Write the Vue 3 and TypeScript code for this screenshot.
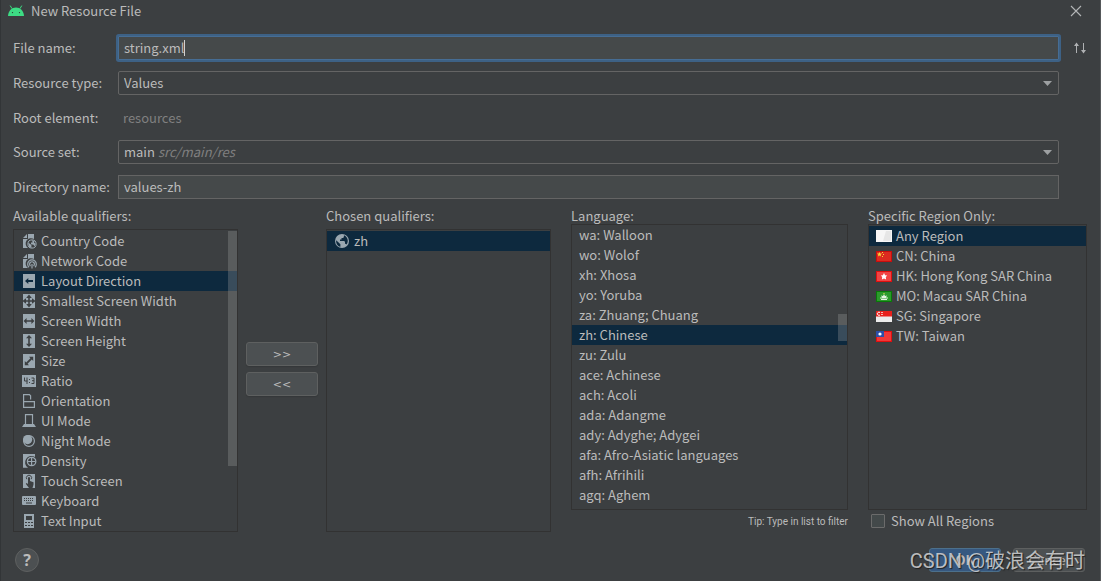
<script setup lang="ts">
import { ref } from 'vue'

interface Qualifier {
  icon: string
  name: string
}

const fileName = ref('string.xml')
const directoryName = ref('values-zh')
const showAll = ref(false)

const qualifiers: Qualifier[] = [
  { icon: 'country', name: 'Country Code' },
  { icon: 'network', name: 'Network Code' },
  { icon: 'direction', name: 'Layout Direction' },
  { icon: 'smallest', name: 'Smallest Screen Width' },
  { icon: 'width', name: 'Screen Width' },
  { icon: 'height', name: 'Screen Height' },
  { icon: 'size', name: 'Size' },
  { icon: 'ratio', name: 'Ratio' },
  { icon: 'orientation', name: 'Orientation' },
  { icon: 'uimode', name: 'UI Mode' },
  { icon: 'night', name: 'Night Mode' },
  { icon: 'density', name: 'Density' },
  { icon: 'touch', name: 'Touch Screen' },
  { icon: 'keyboard', name: 'Keyboard' },
  { icon: 'textinput', name: 'Text Input' },
]
const selectedQualifier = ref('Layout Direction')

const languages: string[] = [
  'wa: Walloon',
  'wo: Wolof',
  'xh: Xhosa',
  'yo: Yoruba',
  'za: Zhuang; Chuang',
  'zh: Chinese',
  'zu: Zulu',
  'ace: Achinese',
  'ach: Acoli',
  'ada: Adangme',
  'ady: Adyghe; Adygei',
  'afa: Afro-Asiatic languages',
  'afh: Afrihili',
  'agq: Aghem',
]
const selectedLanguage = ref('zh: Chinese')

const regions = [
  { flag: 'any', name: 'Any Region' },
  { flag: 'cn', name: 'CN: China' },
  { flag: 'hk', name: 'HK: Hong Kong SAR China' },
  { flag: 'mo', name: 'MO: Macau SAR China' },
  { flag: 'sg', name: 'SG: Singapore' },
  { flag: 'tw', name: 'TW: Taiwan' },
]
const selectedRegion = ref('Any Region')
</script>

<template>
  <div class="dialog">
    <header class="titlebar">
      <svg class="android" viewBox="0 0 16 12" aria-hidden="true">
        <path d="M2.2 0.6 4 3.6M13.8 0.6 12 3.6" stroke="#3ddc84" stroke-width="1" />
        <path d="M0 11C0.3 6 3.8 2.6 8 2.6S15.7 6 16 11Z" fill="#3ddc84" />
        <circle cx="4.5" cy="7.6" r="0.7" fill="#2b3a33" />
        <circle cx="11.5" cy="7.6" r="0.7" fill="#2b3a33" />
      </svg>
      <h1>New Resource File</h1>
      <button class="close" type="button" aria-label="Close">
        <svg viewBox="0 0 12 12"><path d="M1 1 11 11M11 1 1 11" stroke="#b4b6b7" stroke-width="1.1" /></svg>
      </button>
    </header>

    <form class="form" @submit.prevent>
      <label for="file-name">File name:</label>
      <div class="field">
        <input id="file-name" v-model="fileName" class="text focused" type="text" />
        <span class="caret"></span>
      </div>
      <button class="sort" type="button" aria-label="Swap order">
        <svg viewBox="0 0 12 12"><path d="M2.5 1V11M9.5 1V11" stroke="#afb1b3" /><path d="M0 4 2.5 0.5 5 4ZM7 8 9.5 11.5 12 8Z" fill="#afb1b3" /></svg>
      </button>

      <label for="res-type">Resource type:</label>
      <div class="field">
        <select id="res-type"><option>Values</option></select>
        <svg class="arrow" viewBox="0 0 9 5"><path d="M0 0H9L4.5 5Z" fill="#9da0a2" /></svg>
      </div>
      <span></span>

      <span>Root element:</span>
      <output class="root-value">resources</output>
      <span></span>

      <label for="source-set">Source set:</label>
      <div class="field">
        <select id="source-set"><option>main</option></select>
        <em class="path">src/main/res</em>
        <svg class="arrow" viewBox="0 0 9 5"><path d="M0 0H9L4.5 5Z" fill="#9da0a2" /></svg>
      </div>
      <span></span>

      <label for="dir-name">Directory name:</label>
      <div class="field">
        <input id="dir-name" v-model="directoryName" class="text" type="text" />
      </div>
      <span></span>
    </form>

    <main class="panels">
      <section class="panel">
        <h2 id="avail" class="spaced">Available qualifiers:</h2>
        <ul class="list padded" role="listbox" aria-labelledby="avail">
          <li
            v-for="q in qualifiers"
            :key="q.name"
            role="option"
            :aria-selected="q.name === selectedQualifier"
            :class="{ selected: q.name === selectedQualifier }"
            @click="selectedQualifier = q.name"
          >
            <svg class="icon" viewBox="0 0 16 16" aria-hidden="true">
              <template v-if="q.icon === 'country'">
                <path class="f" d="M6 1V5H2ZM7 1H13V6.1A5.3 5.3 0 0 0 7 15H2V6H7Z" />
                <circle cx="11" cy="11" r="4.1" fill="none" stroke="#9aa7b0" stroke-width="1" />
                <path class="f" d="M7.2 9.6 10.4 12V15L8.2 14ZM11 7.2 13.5 8 13 9.4 14.6 11 13.4 13.6 12.6 11.8 10 11.2V9.6H11.6Z" />
              </template>
              <template v-else-if="q.icon === 'network'">
                <path class="f" d="M6 1V5H2ZM7 1H13V6.1A5.3 5.3 0 0 0 7 15H2V6H7Z" />
                <path class="s" d="M8 14.2A4.3 4.3 0 1 1 14 14.2M9.5 13A2.4 2.4 0 1 1 12.5 13M11 11V15.5" />
              </template>
              <template v-else-if="q.icon === 'direction'">
                <path class="f" d="M2 1H14V15H2Z" />
                <path class="d" d="M4 8 7.3 5V7H12V9H7.3V11Z" />
              </template>
              <template v-else-if="q.icon === 'smallest'">
                <path class="f" d="M2 1H14V15H2Z" />
                <path class="d" d="M7.2 5H5.2L8 1.4 10.8 5H8.8V7.2H11V5.2L14.6 8 11 10.8V8.8H8.8V11H10.8L8 14.6 5.2 11H7.2V8.8H5V10.8L1.4 8 5 5.2V7.2H7.2Z" />
              </template>
              <template v-else-if="q.icon === 'width'">
                <path class="f" d="M2 1H14V15H2Z" />
                <path class="d" d="M2.6 8 5.6 5V7.2H10.4V5L13.4 8 10.4 11V8.8H5.6V11Z" />
              </template>
              <template v-else-if="q.icon === 'height'">
                <path class="f" d="M2 1H14V15H2Z" />
                <path class="d" d="M8 2 11 5.2H8.8V10.8H11L8 14 5 10.8H7.2V5.2H5Z" />
              </template>
              <template v-else-if="q.icon === 'size'">
                <path class="f" d="M2 1H14V15H2Z" />
                <path class="d" d="M12.2 3.8V8L10.8 6.6 6.6 10.8 8 12.2H3.8V8L5.2 9.4 9.4 5.2 8 3.8Z" />
              </template>
              <template v-else-if="q.icon === 'ratio'">
                <path class="f" d="M1 2H15V14H1Z" />
                <path d="M3.5 4.5V8H6.5M6 4.5V11M10.5 5H13V10.5H10.5M11 7.7H13" fill="none" stroke="#3c3f41" />
                <path class="d" d="M8 6H9V7H8ZM8 9H9V10H8Z" />
              </template>
              <path v-else-if="q.icon === 'orientation'" class="s" d="M2.6 8.5V1.6H8.4L9.6 2.8V6.5M2.6 8V14.4H13.4V8.6H2.6" />
              <template v-else-if="q.icon === 'uimode'">
                <path class="s" d="M4.5 12V1.6H11.5V12" /><path class="f" d="M3 11H13L15 14H1Z" />
              </template>
              <template v-else-if="q.icon === 'night'">
                <circle cx="8" cy="8" r="5.4" fill="none" stroke="#9aa7b0" stroke-width="1.2" />
                <circle cx="6.6" cy="6.6" r="4.6" class="f" />
              </template>
              <template v-else-if="q.icon === 'density'">
                <path class="f" d="M2 1H14V4A5.4 5.4 0 0 0 7 14.8H2Z" />
                <circle cx="10.6" cy="8.5" r="4.2" fill="#3c3f41" stroke="#9aa7b0" stroke-width="1.3" />
                <path class="s" d="M10.6 5V12M7 8.5H14.2" />
              </template>
              <template v-else-if="q.icon === 'touch'">
                <path class="f" d="M2 1H14V15H2Z" />
                <path class="d" d="M7 4.5Q8 3.5 9 4.5V8L12.5 9.2V11.5L11.5 15H8L4.8 10.8 5.5 10 7 11Z" />
                <path d="M5.8 6.2A2.6 2.6 0 1 1 10.2 6.2" fill="none" stroke="#3c3f41" />
              </template>
              <template v-else-if="q.icon === 'keyboard'">
                <rect class="f" x="1" y="3" width="14" height="9" rx="1" />
                <path d="M3 5.5H13M3 7.5H13" fill="none" stroke="#3c3f41" stroke-dasharray="1 1" /><path d="M5 10H11" stroke="#3c3f41" />
              </template>
              <template v-else>
                <path class="f" d="M3 1H13V15H3Z" />
                <path class="d" d="M5 3H11V7H5ZM4 9H6V10H4ZM7 9H9V10H7ZM10 9H12V10H10ZM4 12H6V13H4ZM7 12H9V13H7ZM10 12H12V13H10Z" />
              </template>
            </svg>
            <span>{{ q.name }}</span>
          </li>
          <li class="thumb thumb-main" role="presentation" aria-hidden="true"></li>
        </ul>
      </section>

      <div class="movers">
        <button class="btn mover" type="button">&gt;&gt;</button>
        <button class="btn mover" type="button">&lt;&lt;</button>
      </div>

      <section class="panel">
        <h2 id="chosen" class="spaced">Chosen qualifiers:</h2>
        <ul class="list padded" role="listbox" aria-labelledby="chosen">
          <li class="selected" role="option" aria-selected="true">
            <svg class="icon" viewBox="0 0 16 16" aria-hidden="true">
              <circle cx="8" cy="8" r="7" class="f" />
              <path d="M2.2 7.2 6.4 11.2V13.8C3.5 13 1.8 10.5 2.2 7.2ZM10 2.2C14 4 14.8 8.3 12.6 11.6 12.3 11 11.8 10.7 11 10.7V8.8L10 8H6V6.6H7.5V5H9.2Q10 4.5 10 2.2Z" fill="#0d293e" />
            </svg>
            <span>zh</span>
          </li>
        </ul>
      </section>

      <section class="panel language">
        <h2 id="lang">Language:</h2>
        <ul class="list" role="listbox" aria-labelledby="lang">
          <li
            v-for="l in languages"
            :key="l"
            role="option"
            :aria-selected="l === selectedLanguage"
            :class="{ selected: l === selectedLanguage }"
            @click="selectedLanguage = l"
          >
            {{ l }}
          </li>
          <li class="thumb thumb-lang" role="presentation" aria-hidden="true"></li>
        </ul>
        <p class="under tip">Tip: Type in list to filter</p>
      </section>

      <section class="panel region">
        <h2 id="region">Specific Region Only:</h2>
        <ul class="list padded" role="listbox" aria-labelledby="region">
          <li
            v-for="r in regions"
            :key="r.name"
            role="option"
            :aria-selected="r.name === selectedRegion"
            :class="{ selected: r.name === selectedRegion }"
            @click="selectedRegion = r.name"
          >
            <svg class="icon" viewBox="0 0 16 16" aria-hidden="true">
              <template v-if="r.flag === 'any'">
                <rect y="2" width="16" height="12" fill="#f6f6f6" /><path d="M10 3H15V13H7Z" fill="#e6e6e6" />
              </template>
              <template v-else-if="r.flag === 'cn'">
                <rect y="3" width="16" height="11" fill="#c90d0d" /><rect x="1" y="4" width="14" height="9" fill="#dc2b20" />
                <path d="M3.5 4 4.2 5.5 6 5.6 4.6 6.7 5 8.4 3.5 7.5 2 8.4 2.4 6.7 1 5.6 2.8 5.5ZM6 4H7V5H6ZM7 6H8V7H7ZM6 8H7V9H6Z" fill="#f5d83a" />
              </template>
              <template v-else-if="r.flag === 'hk'">
                <rect y="3" width="16" height="11" fill="#e00f0f" /><rect x="1" y="4" width="14" height="9" fill="#f04444" />
                <path d="M8 5 9.1 7.2 11.2 7.4 9.8 9.1 10.1 11.6 8 10.4 5.9 11.6 6.2 9.1 4.8 7.4 6.9 7.2Z" fill="#fff" />
              </template>
              <template v-else-if="r.flag === 'mo'">
                <rect y="3" width="16" height="11" fill="#087a08" /><rect x="1" y="4" width="14" height="9" fill="#2c9a2c" />
                <path d="M8 6 9 8 11 7.5 10 9.5H12V10.5H4V9.5H6L5 7.5 7 8ZM5 11H11V12H5Z" fill="#e4f4df" /><path d="M7.5 5H8.5V6H7.5Z" fill="#ffe54a" />
              </template>
              <template v-else-if="r.flag === 'sg'">
                <rect y="3" width="16" height="11" fill="#ececec" /><rect y="3" width="16" height="5.5" fill="#e8201c" />
                <path d="M4 4.5A1.6 1.6 0 1 0 4 7" fill="none" stroke="#fff" /><path d="M5 4H7V5H5ZM5 6H7V7H5Z" fill="#f8b5b0" />
              </template>
              <template v-else>
                <rect y="3" width="16" height="11" fill="#e00f0f" /><rect x="1" y="4" width="14" height="9" fill="#f03838" />
                <rect y="3" width="8" height="6" fill="#2c4fa8" /><circle cx="4" cy="6" r="1.6" fill="#fff" />
              </template>
            </svg>
            <span>{{ r.name }}</span>
          </li>
        </ul>
        <label class="under check"><input v-model="showAll" type="checkbox" />Show All Regions</label>
      </section>
    </main>

    <footer class="footer">
      <button class="help" type="button" aria-label="Help">?</button>
      <div class="actions">
        <button class="btn primary" type="button">OK</button>
        <button class="btn" type="button">Cancel</button>
        <span class="watermark">CSDN @破浪会有时</span>
      </div>
    </footer>
  </div>
</template>

<style>
body {
  margin: 0;
  background: #3c3f41;
}
</style>

<style scoped>
.dialog {
  box-sizing: border-box;
  min-height: 100vh;
  display: flex;
  flex-direction: column;
  border-left: 1px solid #323537;
  border-right: 1px solid #55585a;
  background: #3c3f41;
  color: #bbbbbb;
  font: 13px/20px 'Noto Sans CJK SC', sans-serif;
}
.dialog * {
  box-sizing: border-box;
}
button,
input,
select {
  font: inherit;
  color: inherit;
  margin: 0;
}
h1,
h2,
p,
ul {
  margin: 0;
  padding: 0;
  font: inherit;
}
.titlebar {
  display: flex;
  align-items: center;
  height: 22px;
  padding: 0 18px 0 7px;
  gap: 7px;
}
.android {
  width: 16px;
  height: 12px;
  fill: none;
}
.close {
  margin-left: auto;
  padding: 0;
  border: 0;
  background: none;
  display: flex;
}
.close svg {
  width: 12px;
  height: 12px;
}
.form {
  display: grid;
  grid-template-columns: 105px 1fr 41px;
  grid-template-rows: 24px 24px 23px 24px 24px;
  row-gap: 11px;
  align-items: center;
  padding: 14px 0 0 12px;
}
.field {
  position: relative;
  display: flex;
}
.text,
select {
  width: 100%;
  height: 24px;
  border: 1px solid #646464;
  padding: 0 5px 2px;
  background: #45494a;
  outline: none;
}
select {
  appearance: none;
  padding-bottom: 0;
  border-radius: 2px;
  background: #3c3f41;
}
.focused {
  border-color: #466d94;
  box-shadow: 0 0 0 2px #3d6185;
  border-radius: 1px;
  caret-color: transparent;
}
.caret {
  position: absolute;
  left: 66px;
  top: 4px;
  width: 1px;
  height: 16px;
  background: #d0d0d0;
}
.arrow {
  position: absolute;
  right: 7px;
  top: 10px;
  width: 9px;
  height: 5px;
}
.path {
  position: absolute;
  left: 40px;
  top: 2px;
  color: #808080;
  pointer-events: none;
}
.root-value {
  padding-left: 5px;
  color: #808080;
}
.sort {
  justify-self: center;
  display: flex;
  padding: 0;
  border: 0;
  background: none;
}
.sort svg {
  width: 12px;
  height: 12px;
}
.panels {
  flex: 1;
  display: grid;
  grid-template-columns: minmax(0, 225fr) 88px minmax(0, 225fr) minmax(0, 297fr) minmax(0, 239fr);
  padding: 8px 13px 0 12px;
}
.panel {
  display: flex;
  flex-direction: column;
  min-width: 0;
}
.language,
.region {
  margin-left: 20px;
}
h2 {
  height: 17px;
  line-height: 18px;
  white-space: nowrap;
}
.spaced {
  margin-bottom: 5px;
}
.list {
  position: relative;
  flex: 1;
  overflow: hidden;
  list-style: none;
  border: 1px solid #323232;
}
.padded {
  padding-top: 1px;
}
li {
  height: 20px;
  padding: 0 7px;
  display: flex;
  align-items: center;
  gap: 4px;
  line-height: 22px;
  white-space: nowrap;
}
.selected {
  background: #0d293e;
}
.icon {
  flex: none;
  width: 16px;
  height: 16px;
}
.f {
  fill: #9aa7b0;
}
.d {
  fill: #3c3f41;
}
.selected .d {
  fill: #0d293e;
}
.s {
  fill: none;
  stroke: #9aa7b0;
  stroke-width: 1.2;
}
.thumb {
  position: absolute;
  right: 0;
  width: 9px;
  padding: 0;
  background: rgba(160, 160, 160, 0.3);
}
.thumb-main {
  top: 1px;
  height: 235px;
}
.thumb-lang {
  top: 89px;
  height: 27px;
}
.under {
  height: 22px;
  display: flex;
  align-items: center;
}
.tip {
  justify-content: flex-end;
  font: 10px Roboto, sans-serif;
}
.check {
  padding-left: 3px;
  gap: 6px;
}
.check input {
  appearance: none;
  width: 14px;
  height: 14px;
  border: 1px solid #6b6b6b;
  border-radius: 1px;
  background: #43494a;
}
.movers {
  display: flex;
  flex-direction: column;
  align-items: center;
  gap: 6px;
  padding-top: 135px;
}
.btn {
  width: 72px;
  height: 24px;
  padding: 0;
  border: 1px solid #5e6060;
  border-radius: 3px;
  background: #4c5052;
  line-height: 20px;
}
.mover {
  padding-top: 2px;
  box-shadow: 0 1px 1px #35383a;
  font: 11px/20px 'DejaVu Sans', sans-serif;
}
.footer {
  height: 49px;
  display: flex;
  align-items: center;
  justify-content: space-between;
  padding: 7px 15px 0 14px;
}
.help {
  width: 24px;
  height: 24px;
  padding: 0;
  border: 1px solid #5e6060;
  border-radius: 50%;
  background: #4c5052;
  font: bold 16px/20px 'Noto Sans', sans-serif;
}
.actions {
  position: relative;
  display: flex;
  gap: 12px;
}
.primary {
  background: #365880;
  border-color: #4c708c;
  font-weight: bold;
}
.watermark {
  position: absolute;
  right: 0;
  top: -2px;
  color: rgba(225, 225, 225, 0.8);
  font: 20px/30px Roboto, 'Noto Sans CJK SC', sans-serif;
  white-space: nowrap;
  text-shadow: 1px 1px 1px #202020;
  pointer-events: none;
}
</style>
